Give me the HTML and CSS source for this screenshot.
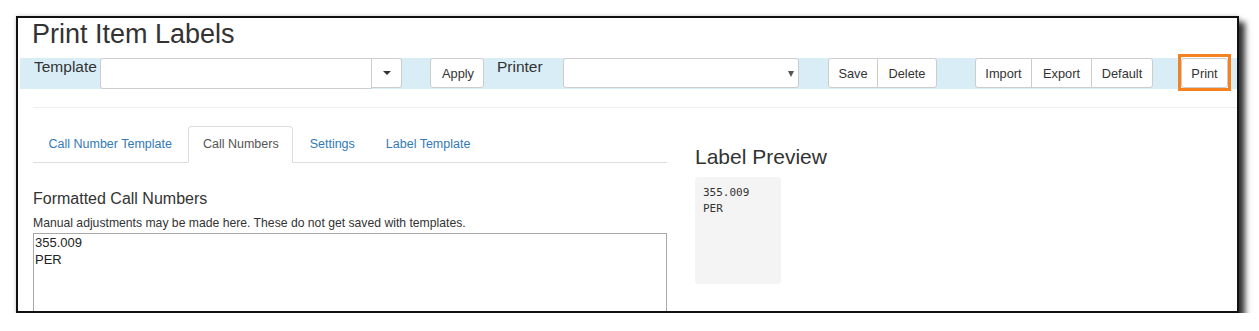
FILE: index.html
```html
<!DOCTYPE html>
<html lang="en">
<head>
  <meta charset="UTF-8" />
  <title>Print Item Labels</title>
  <link rel="stylesheet" href="styles.css">
</head>
<body>
  <div class="shot">
    <div class="page">
      <h1 class="title">Print Item Labels</h1>

      <div class="toolbar">
        <label class="bar-label">Template</label>
        <div class="input-group">
          <input type="text" class="tpl-input" />
          <button class="caret-btn"><span class="caret"></span></button>
        </div>
        <button class="btn apply">Apply</button>
        <label class="bar-label">Printer</label>
        <div class="select"><span class="select-arrow"></span></div>
        <div class="btn-group save-group">
          <button class="btn">Save</button>
          <button class="btn">Delete</button>
        </div>
        <div class="btn-group io-group">
          <button class="btn">Import</button>
          <button class="btn">Export</button>
          <button class="btn">Default</button>
        </div>
        <span class="print-mark"><button class="btn print-btn">Print</button></span>
      </div>

      <hr class="rule" />

      <div class="columns">
        <div class="left">
          <ul class="tabs">
            <li><a>Call Number Template</a></li>
            <li class="active"><a>Call Numbers</a></li>
            <li><a>Settings</a></li>
            <li><a>Label Template</a></li>
          </ul>
          <h3 class="section-title">Formatted Call Numbers</h3>
          <div class="help">Manual adjustments may be made here. These do not get saved with templates.</div>
          <textarea class="call-numbers">355.009
PER</textarea>
        </div>
        <div class="right">
          <h2 class="preview-title">Label Preview</h2>
          <pre class="label-preview">355.009
PER</pre>
        </div>
      </div>
    </div>
  </div>
</body>
</html>
```

FILE: styles.css
```css
body {
  margin: 0;
  background: #fff;
  font-family: "Liberation Sans", Arial, sans-serif;
  color: #333;
}
.shot {
  margin: 16px 0 0 16px;
  width: 1219px;
  height: 293px;
  border: 2px solid #111;
  box-shadow: 6px 6px 6px rgba(0, 0, 0, 0.8), 0 0 4px rgba(0, 0, 0, 0.2);
  overflow: hidden;
  background: #fff;
}
.page {
  padding-left: 2px;
}
.title {
  margin: 1px 0 0;
  padding-left: 12px;
  font-size: 27px;
  font-weight: normal;
  line-height: 30px;
  color: #333;
}

/* toolbar */
.toolbar {
  display: flex;
  align-items: flex-start;
  height: 31px;
  margin-top: 9px;
  padding-left: 14px;
  background: #d9edf7;
}
.bar-label {
  width: 66px;
  font-size: 15.5px;
  line-height: 18px;
  flex: none;
}
.input-group {
  display: flex;
  flex: none;
}
.tpl-input {
  box-sizing: border-box;
  width: 272px;
  height: 31px;
  margin: 0;
  border: 1px solid #ccc;
  border-radius: 3px 0 0 3px;
  background: #fff;
}
.caret-btn {
  box-sizing: border-box;
  width: 30px;
  height: 30px;
  margin: 0;
  padding: 0;
  border: 1px solid #ccc;
  border-left: none;
  border-radius: 0 3px 3px 0;
  background: #fff;
  display: flex;
  align-items: center;
  justify-content: center;
}
.caret {
  width: 0;
  height: 0;
  border-top: 4px solid #333;
  border-left: 4px solid transparent;
  border-right: 4px solid transparent;
}
.btn {
  box-sizing: border-box;
  height: 30px;
  margin: 0;
  padding: 0 11px;
  border: 1px solid #ccc;
  border-radius: 3px;
  background: #fff;
  color: #333;
  font-family: "Liberation Sans", Arial, sans-serif;
  font-size: 12.8px;
  flex: none;
}
.apply {
  width: 54px;
  margin-left: 28px;
  margin-right: 13px;
}
.select {
  box-sizing: border-box;
  position: relative;
  width: 236px;
  height: 30px;
  border: 1px solid #ccc;
  border-radius: 3px;
  background: #fff;
  flex: none;
}
.select-arrow {
  position: absolute;
  right: 4px;
  top: 12px;
  border-top: 6px solid #555;
  border-left: 3.5px solid transparent;
  border-right: 3.5px solid transparent;
}
.btn-group {
  display: flex;
  flex: none;
}
.btn-group .btn {
  border-radius: 0;
  margin-left: -1px;
  padding: 0;
}
.btn-group .btn:first-child {
  border-radius: 3px 0 0 3px;
  margin-left: 0;
}
.btn-group .btn:last-child {
  border-radius: 0 3px 3px 0;
}
.save-group {
  margin-left: 29px;
}
.save-group .btn:nth-child(1) { width: 50px; }
.save-group .btn:nth-child(2) { width: 60px; }
.io-group {
  margin-left: 38px;
}
.io-group .btn:nth-child(1) { width: 57px; }
.io-group .btn:nth-child(2) { width: 61px; }
.io-group .btn:nth-child(3) { width: 62px; }
.print-mark {
  display: block;
  flex: none;
  margin: -4px 0 0 25px;
  padding: 1px 0 0;
  border: 3px solid #f5821f;
  background: #fff;
}
.print-btn {
  display: block;
  width: 47px;
  height: 30px;
  padding: 0;
}

.rule {
  margin: 18px 0 0 13px;
  border: none;
  border-top: 1px solid #eee;
}

/* content */
.columns {
  display: flex;
  padding-left: 13px;
}
.left {
  width: 634px;
  flex: none;
}
.right {
  margin-left: 28px;
}
.tabs {
  display: flex;
  margin: 18px 0 0;
  padding: 0 0 0 1px;
  list-style: none;
  border-bottom: 1px solid #ddd;
}
.tabs li {
  margin: 0 2px -1px 0;
}
.tabs a {
  display: block;
  box-sizing: border-box;
  height: 37px;
  padding: 0 13.5px;
  line-height: 34px;
  font-size: 12.5px;
  color: #337ab7;
  border: 1px solid transparent;
  border-radius: 4px 4px 0 0;
}
.tabs li.active a {
  color: #555;
  background: #fff;
  border-color: #ddd;
  border-bottom-color: #fff;
}
.section-title {
  margin: 27px 0 0;
  font-size: 16px;
  font-weight: normal;
  line-height: 18px;
}
.help {
  margin-top: 8px;
  font-size: 12.2px;
  line-height: 14px;
}
.call-numbers {
  display: block;
  box-sizing: border-box;
  width: 634px;
  height: 120px;
  margin-top: 3px;
  padding: 0 1px;
  border: 1px solid #a9a9a9;
  font-family: "Liberation Sans", Arial, sans-serif;
  font-size: 13px;
  line-height: 17px;
  color: #222;
  resize: none;
}
.preview-title {
  margin: 37px 0 0;
  font-size: 21px;
  font-weight: normal;
  line-height: 23px;
}
.label-preview {
  box-sizing: border-box;
  width: 86px;
  height: 107px;
  margin: 9px 0 0;
  padding: 8px;
  background: #f4f4f4;
  border-radius: 4px;
  font-family: "DejaVu Sans Mono", monospace;
  font-size: 11px;
  line-height: 16px;
  color: #333;
}
```
